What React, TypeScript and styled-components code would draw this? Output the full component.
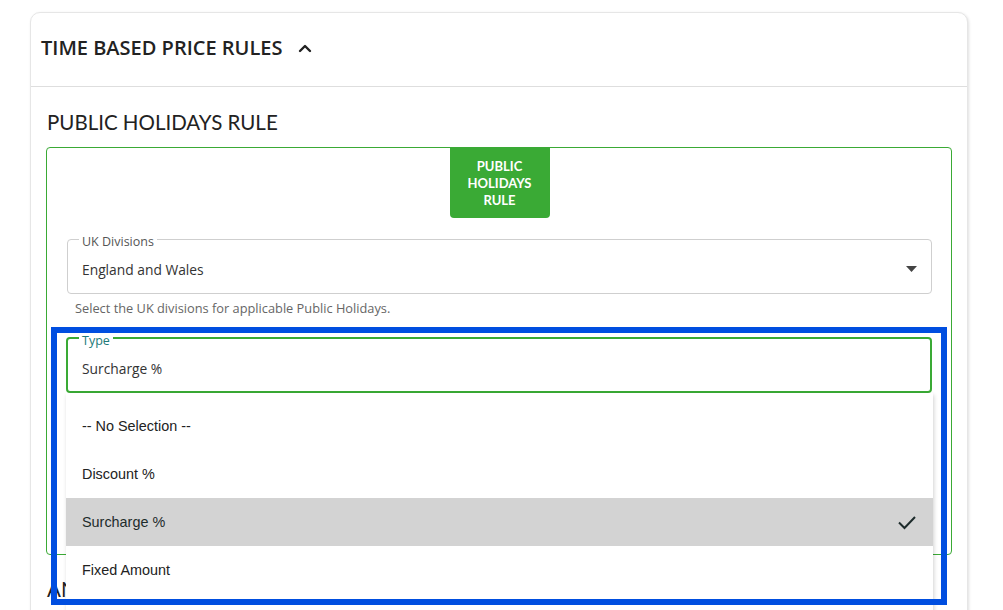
import styled, { createGlobalStyle } from 'styled-components';

interface FieldProps {
  active?: boolean;
}

interface ItemProps {
  selected?: boolean;
}

const GlobalStyle = createGlobalStyle`
  html, body {
    margin: 0;
    padding: 0;
    background: #fff;
    font-family: 'Open Sans', 'Noto Sans', sans-serif;
    color: #222;
  }
  * {
    box-sizing: border-box;
  }
`;

const Page = styled.div`
  padding: 12px 35px 0 30px;
  height: 610px;
  overflow: hidden;
`;

const Card = styled.section`
  border: 1px solid #e6e6e6;
  border-radius: 10px;
  box-shadow: 1px 1px 3px rgba(0, 0, 0, 0.12);
  background: #fff;
`;

const CardHeader = styled.header`
  display: flex;
  align-items: center;
  gap: 16px;
  height: 74px;
  padding: 0 0 4px 10px;
  border-bottom: 1px solid #dedede;
`;

const HeaderTitle = styled.h2`
  margin: 0;
  font-size: 20px;
  font-weight: 600;
  color: #222;
`;

const CardBody = styled.div`
  padding: 23px 15px 60px;
`;

const SectionTitle = styled.h3`
  margin: 0 0 0 1px;
  font-family: Lato, 'Noto Sans', sans-serif;
  font-size: 20.5px;
  line-height: 24px;
  font-weight: 400;
  color: #222;
`;

const RuleBox = styled.div`
  display: flex;
  flex-direction: column;
  margin: 13px 0 22px;
  padding: 0 19px 161px 20px;
  border: 1px solid #3aaa35;
  border-radius: 4px;
`;

const Badge = styled.div`
  align-self: center;
  display: flex;
  align-items: center;
  justify-content: center;
  width: 100px;
  height: 70px;
  margin-bottom: 12px;
  border-radius: 0 0 4px 4px;
  background: #3aaa35;
  color: #fff;
  font-family: Lato, 'Noto Sans', sans-serif;
  font-size: 13px;
  font-weight: 700;
  line-height: 17px;
  text-align: center;
`;

const Field = styled.fieldset<FieldProps>`
  margin: 0;
  height: 64px;
  padding: 0 14px;
  border: ${(p) => (p.active ? '2px solid #3aaa35' : '1px solid #cfcfcf')};
  border-radius: 4px;
`;

const Legend = styled.legend<FieldProps>`
  margin-left: -3px;
  padding: 6px 3px 0;
  font-size: 12.5px;
  line-height: 12px;
  color: ${(p) => (p.active ? '#217a78' : '#555')};
`;

const FieldRow = styled.div`
  display: flex;
  align-items: center;
  justify-content: space-between;
  height: 42px;
  font-size: 13.8px;
  color: #333;
`;

const Helper = styled.div`
  margin: 6px 0 13px;
  padding-left: 8px;
  font-size: 12.8px;
  line-height: 16px;
  color: #666;
`;

const TypeWrap = styled.div`
  position: relative;
  margin-left: -1px;
`;

const Menu = styled.ul`
  position: absolute;
  top: 100%;
  left: 0;
  right: -1px;
  z-index: 2;
  margin: 0;
  padding: 9px 0 20px;
  list-style: none;
  background: #fff;
  box-shadow: 1px 2px 4px rgba(0, 0, 0, 0.18);
`;

const MenuItem = styled.li<ItemProps>`
  display: flex;
  align-items: center;
  justify-content: space-between;
  height: 48px;
  padding: 0 16px;
  font-family: 'Liberation Sans', Arial, sans-serif;
  font-size: 14.4px;
  color: ${(p) => (p.selected ? '#1d2b2b' : '#222')};
  background: ${(p) => (p.selected ? '#d3d3d3' : 'transparent')};
`;

const Highlight = styled.div`
  position: absolute;
  top: -2px;
  left: -15px;
  right: -15px;
  height: 278px;
  z-index: 3;
  border: 6px solid #004ee0;
  pointer-events: none;
`;

const Chevron = () => (
  <svg width="14" height="10" viewBox="0 0 14 10">
    <polyline
      points="2,8 7,3 12,8"
      fill="none"
      stroke="#222"
      strokeWidth="2.4"
      strokeLinecap="round"
      strokeLinejoin="round"
    />
  </svg>
);

const Caret = () => (
  <svg width="11" height="6" viewBox="0 0 11 6">
    <polygon points="0,0 11,0 5.5,6" fill="#444" />
  </svg>
);

const Check = () => (
  <svg width="20" height="16" viewBox="0 0 20 16">
    <polyline
      points="2,8.5 7.5,14 18,3"
      fill="none"
      stroke="#1d2b2b"
      strokeWidth="2"
    />
  </svg>
);

const options = ['-- No Selection --', 'Discount %', 'Surcharge %', 'Fixed Amount'];

const App = () => {
  const selected = 'Surcharge %';
  return (
    <>
      <GlobalStyle />
      <Page>
        <Card>
          <CardHeader>
            <HeaderTitle>TIME BASED PRICE RULES</HeaderTitle>
            <Chevron />
          </CardHeader>
          <CardBody>
            <SectionTitle>PUBLIC HOLIDAYS RULE</SectionTitle>
            <RuleBox>
              <Badge>
                PUBLIC
                <br />
                HOLIDAYS
                <br />
                RULE
              </Badge>
              <Field>
                <Legend>UK Divisions</Legend>
                <FieldRow>
                  England and Wales
                  <Caret />
                </FieldRow>
              </Field>
              <Helper>Select the UK divisions for applicable Public Holidays.</Helper>
              <TypeWrap>
                <Field active>
                  <Legend active>Type</Legend>
                  <FieldRow>{selected}</FieldRow>
                </Field>
                <Menu>
                  {options.map((o) => (
                    <MenuItem key={o} selected={o === selected}>
                      {o}
                      {o === selected && <Check />}
                    </MenuItem>
                  ))}
                </Menu>
                <Highlight />
              </TypeWrap>
            </RuleBox>
            <SectionTitle>ANNUAL RULE</SectionTitle>
          </CardBody>
        </Card>
      </Page>
    </>
  );
};

export default App;
